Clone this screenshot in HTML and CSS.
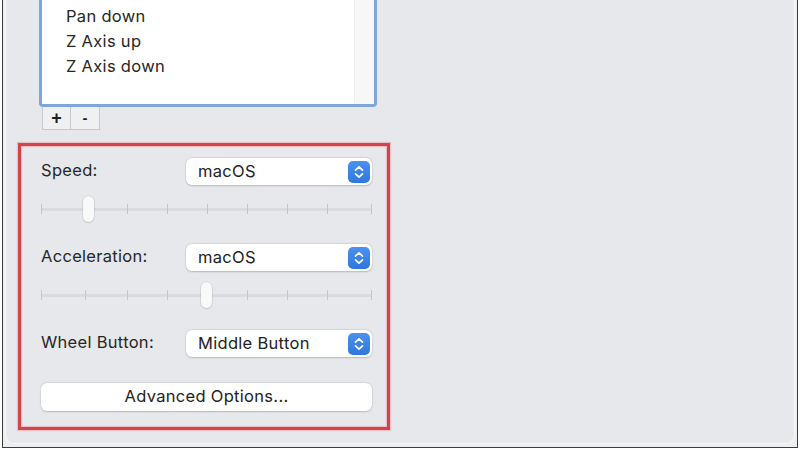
FILE: index.html
```html
<!DOCTYPE html>
<html>
<head>
<meta charset="utf-8">
<link rel="stylesheet" href="styles.css">
</head>
<body>
<div class="frame">
  <div class="panel">
    <div class="column">
      <div class="listbox">
        <ul class="items">
          <li>Pan down</li>
          <li>Z Axis up</li>
          <li>Z Axis down</li>
        </ul>
        <div class="gutter"></div>
      </div>
      <div class="pm">
        <button class="pm-btn plus">+</button>
        <button class="pm-btn minus">-</button>
      </div>

      <section class="settings">
        <div class="row">
          <span class="label">Speed:</span>
          <div class="popup"><span>macOS</span><span class="stepper"><svg width="22" height="22" viewBox="0 0 22 22"><path d="M7.5 9.2 L11 5.8 L14.5 9.2 M7.5 12.8 L11 16.2 L14.5 12.8" fill="none" stroke="#fff" stroke-width="1.7" stroke-linecap="round" stroke-linejoin="round"/></svg></span></div>
        </div>
        <div class="slider">
          <div class="ticks"><i></i><i></i><i></i><i></i><i></i><i></i><i></i><i></i><i></i></div>
          <span class="knob" style="left:42px"></span>
        </div>

        <div class="row">
          <span class="label">Acceleration:</span>
          <div class="popup"><span>macOS</span><span class="stepper"><svg width="22" height="22" viewBox="0 0 22 22"><path d="M7.5 9.2 L11 5.8 L14.5 9.2 M7.5 12.8 L11 16.2 L14.5 12.8" fill="none" stroke="#fff" stroke-width="1.7" stroke-linecap="round" stroke-linejoin="round"/></svg></span></div>
        </div>
        <div class="slider">
          <div class="ticks"><i></i><i></i><i></i><i></i><i></i><i></i><i></i><i></i><i></i></div>
          <span class="knob" style="left:160px"></span>
        </div>

        <div class="row">
          <span class="label">Wheel Button:</span>
          <div class="popup"><span>Middle Button</span><span class="stepper"><svg width="22" height="22" viewBox="0 0 22 22"><path d="M7.5 9.2 L11 5.8 L14.5 9.2 M7.5 12.8 L11 16.2 L14.5 12.8" fill="none" stroke="#fff" stroke-width="1.7" stroke-linecap="round" stroke-linejoin="round"/></svg></span></div>
        </div>

        <button class="advanced">Advanced Options...</button>
      </section>
    </div>
  </div>
</div>
</body>
</html>
```
FILE: styles.css
```css
html, body {
  margin: 0;
  padding: 0;
}
body {
  width: 800px;
  height: 450px;
  overflow: hidden;
  background: #ffffff;
  font-family: Inter, "Noto Sans", "Liberation Sans", sans-serif;
  color: #262626;
}
.frame {
  box-sizing: border-box;
  margin: 0 2px;
  height: 448px;
  border: 1px solid #3c3c3c;
  border-top: none;
  background: #eceef0;
  padding: 0 2px 3px 2px;
}
.panel {
  box-sizing: border-box;
  height: 100%;
  background: #e6e8eb;
  border: 1px solid #f6f7f8;
  border-top: none;
  border-radius: 0 0 9px 9px;
  padding-left: 12px;
}
.column {
  width: 372px;
}
.listbox {
  box-sizing: border-box;
  margin-left: 21px;
  width: 338px;
  height: 107px;
  background: #ffffff;
  border: 3px solid #7fa5dc;
  border-top: none;
  border-radius: 0 0 4px 4px;
  display: flex;
}
.items {
  flex: 1;
  list-style: none;
  margin: 0;
  padding: 4px 0 0 24px;
  font-size: 16.5px;
  letter-spacing: 0.3px;
  line-height: 25px;
  color: #262626;
}
.gutter {
  width: 19px;
  background: #f7f7f8;
  border-left: 1px solid #eeeeef;
}
.pm {
  display: flex;
  margin-left: 24px;
  height: 23px;
}
.pm-btn {
  box-sizing: border-box;
  width: 29px;
  height: 23px;
  margin: 0;
  padding: 0;
  background: #eef0f2;
  border: 1px solid #c6c8cb;
  border-top: none;
  font-family: "Liberation Sans", sans-serif;
  font-weight: bold;
  font-size: 18px;
  line-height: 20px;
  color: #1e1e1e;
}
.pm-btn.minus {
  border-left: none;
  font-size: 15px;
}
.settings {
  box-sizing: border-box;
  margin-top: 13px;
  width: 372px;
  border: 3px solid #d3434b;
  box-shadow: inset 0 0 1px 1px rgba(240, 150, 155, 0.55), 0 0 1px 1px rgba(240, 150, 155, 0.45);
  padding: 12px 15px 16px 20px;
  display: flex;
  flex-direction: column;
}
.row {
  display: flex;
  align-items: center;
  height: 27px;
}
.row + .row,
.slider + .row {
  margin-top: 22px;
}
.label {
  width: 145px;
  font-size: 16.5px;
  letter-spacing: 0.3px;
  line-height: 25px;
  margin-top: -2px;
  color: #262626;
}
.popup {
  box-sizing: border-box;
  width: 186px;
  height: 27px;
  background: #ffffff;
  border-radius: 6px;
  box-shadow: 0 0.5px 2px rgba(0, 0, 0, 0.18), 0 0 0 0.5px rgba(0, 0, 0, 0.06);
  display: flex;
  align-items: center;
  justify-content: space-between;
  padding: 0 2px 0 12px;
  font-size: 16.5px;
  letter-spacing: 0.3px;
  color: #222;
}
.popup > span:first-child {
  margin-top: -2px;
}
.stepper {
  width: 22px;
  height: 22px;
  border-radius: 5px;
  background: linear-gradient(#4b91ef, #2f76de);
  display: flex;
}
.slider {
  position: relative;
  margin-top: 11px;
  height: 26px;
}
.ticks {
  display: grid;
  grid-template-columns: 44px 42px 40px 40px 40px 40px 40px 1fr 1px;
  height: 26px;
  background: linear-gradient(#dadbde, #dadbde) 0 12px / 100% 3px no-repeat;
}
.ticks i {
  display: block;
  width: 1px;
  height: 10px;
  margin-top: 8px;
  background: #c5c6c9;
}
.knob {
  position: absolute;
  top: 0;
  width: 11px;
  height: 26px;
  box-sizing: border-box;
  border-radius: 6px;
  background: #f9f9fa;
  box-shadow: 0 0.5px 1.5px rgba(0, 0, 0, 0.22), 0 0 0 0.5px rgba(0, 0, 0, 0.08);
}
.advanced {
  margin-top: 26px;
  height: 28px;
  width: 100%;
  border: none;
  border-radius: 6px;
  background: #ffffff;
  box-shadow: 0 0.5px 2px rgba(0, 0, 0, 0.18), 0 0 0 0.5px rgba(0, 0, 0, 0.06);
  font-family: Inter, "Noto Sans", "Liberation Sans", sans-serif;
  font-size: 16.5px;
  letter-spacing: 0.3px;
  color: #222;
  padding: 0 0 2px 0;
}
```
